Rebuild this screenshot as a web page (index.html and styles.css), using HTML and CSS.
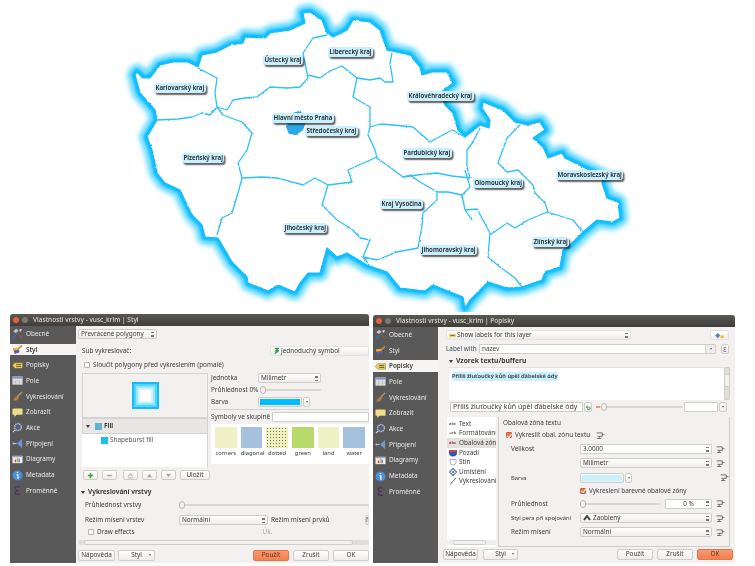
FILE: index.html
```html
<!DOCTYPE html>
<html lang="cs">
<head>
<meta charset="utf-8">
<title>Vlastnosti vrstvy</title>
<link rel="stylesheet" href="styles.css">
</head>
<body>
<svg class="defs" width="0" height="0">
  <defs>
    <filter id="rough" x="-5%" y="-5%" width="110%" height="110%" color-interpolation-filters="sRGB">
      <feTurbulence type="fractalNoise" baseFrequency="0.3" numOctaves="2" seed="4" result="noise"/>
      <feDisplacementMap in="SourceGraphic" in2="noise" scale="2" xChannelSelector="R" yChannelSelector="G"/>
    </filter>
    <filter id="blur3" x="-10%" y="-10%" width="120%" height="120%" color-interpolation-filters="sRGB"><feGaussianBlur stdDeviation="2.400"/></filter>
    <filter id="blur1" x="-10%" y="-10%" width="120%" height="120%" color-interpolation-filters="sRGB"><feGaussianBlur stdDeviation=".8"/></filter>
    <symbol id="i-general" viewBox="0 0 12 12"><path d="M1 11 8 3" stroke="#2f6fc0" stroke-width="1.6"/><path d="M11 11 4 3" stroke="#8a5a2c" stroke-width="1.6"/><path d="M1.500 3.500 4.500.8 7 3 4 5.500Z" fill="#ccc"/><path d="M8 1.500 10.800 1 10 3.500 8.500 4Z" fill="#ddd"/></symbol>
    <symbol id="i-style" viewBox="0 0 12 12"><path d="M1 5 7 4 8 9 3 10.500Z" fill="#d9473d"/><path d="M2 8 8 6.500 8 9 3 10.500Z" fill="#3e66c4"/><path d="M1 5 7 4 7.500 6 1.500 7Z" fill="#e8b93a"/><path d="M7 5 11 1.500" stroke="#c98a3a" stroke-width="1.600"/></symbol>
    <symbol id="i-label" viewBox="0 0 12 12"><path d="M3 3H11.500V9H3L.5 6Z" fill="#eed358" stroke="#7a6520" stroke-width=".5"/><path d="M4.500 5H10M4.500 7H10" stroke="#544" stroke-width=".9"/></symbol>
    <symbol id="i-table" viewBox="0 0 12 12"><rect x=".5" y="1.500" width="11" height="9" fill="#e7e7e7"/><rect x=".5" y="1.500" width="11" height="2.500" fill="#7f97b8"/><path d="M.5 6.500H11.500M.5 8.500H11.500M4 4V10.500M8 4V10.500" stroke="#aaa" stroke-width=".5"/></symbol>
    <symbol id="i-broom" viewBox="0 0 12 12"><path d="M11 1 6 6" stroke="#c9a35a" stroke-width="1.200"/><path d="M6.500 4.500 8 6 5.500 10 1.500 10.500 2.500 7.500Z" fill="#b9823c"/></symbol>
    <symbol id="i-bubble" viewBox="0 0 12 12"><path d="M1.500 1.500H10.500Q11.500 1.500 11.500 2.500V7.500Q11.500 8.500 10.500 8.500H5L2.500 11V8.500H1.500Q.5 8.500 .5 7.500V2.500Q.5 1.500 1.500 1.500Z" fill="#eedd85"/></symbol>
    <symbol id="i-gear" viewBox="0 0 12 12"><circle cx="6.500" cy="5.500" r="3.700" fill="none" stroke="#aebfe0" stroke-width="1.700" stroke-dasharray="1.600 .7"/><circle cx="6.500" cy="5.500" r="1.500" fill="#3f68b8"/><path d="M3.500 8.500 1 11" stroke="#ddd" stroke-width="1.200"/></symbol>
    <symbol id="i-join" viewBox="0 0 12 12"><path d="M11 1V11L5.500 6Z" fill="#6f96d8"/><path d="M1 6H5" stroke="#a9c3ea" stroke-width="1.300"/><circle cx="1.500" cy="6" r="1" fill="#a9c3ea"/></symbol>
    <symbol id="i-chart" viewBox="0 0 12 12"><rect x=".5" y="2" width="11" height="8" fill="#efefef"/><rect x="3" y="6" width="1.500" height="3" fill="#d2483f"/><rect x="5" y="4" width="1.500" height="5" fill="#e2b33b"/><rect x="7" y="5" width="1.500" height="4" fill="#4b77c9"/><rect x=".5" y="2" width="11" height="1.500" fill="#8ea6c8"/></symbol>
    <symbol id="i-info" viewBox="0 0 12 12"><circle cx="6" cy="6" r="5.500" fill="#4a8fdc"/><path d="M6 2.300V3.600M5 5.200H6.400V9.500" stroke="#fff" stroke-width="1.400" fill="none"/></symbol>
    <symbol id="i-eps" viewBox="0 0 12 12"><path d="M8.500 2H4.500Q3 2 3.500 3.500L5 6 3.500 8.500Q3 10 4.500 10H8.500M4.500 6H7.500" fill="none" stroke="#4c2f66" stroke-width="1.200"/></symbol>
    <symbol id="i-data" viewBox="0 0 10 8"><path d="M.5 1H7V5H1.500M7 3H9.500M3.500 5V7.500M1 7.500H6" fill="none" stroke="#55554f" stroke-width=".9"/></symbol>
  </defs>
</svg>

<div class="map">
  <svg class="map-svg" width="755" height="312" viewBox="0 0 755 312">
    <path class="glow-wide" filter="url(#blur3)" d="M137 72 143 78 150 78 160 65 173 62 188 62 198 67 202 55 217 52 230 45 243 43 245 37 265 38 270 33 290 30 305 23 303 13 310 12 322 20 327 33 333 37 347 30 353 20 370 22 380 30 387 50 410 55 420 67 422 75 432 72 447 72 453 83 440 93 445 105 453 113 458 130 465 137 480 125 489 128 490 120 482 108 483 102 503 110 515 122 527 125 540 122 545 130 533 138 543 147 548 158 562 153 565 158 583 167 603 177 602 183 607 198 618 202 620 218 613 222 597 220 583 232 570 245 563 250 560 267 545 272 542 280 522 287 507 288 488 282 470 300 465 308 463 297 433 285 425 291 400 288 387 272 367 265 347 253 337 257 327 248 320 273 308 273 300 283 295 292 278 285 268 291 248 283 247 277 232 262 218 238 205 237 202 225 192 215 180 190 165 183 157 173 152 150 147 137 157 120 155 110 140 93 135 75Z"/>
    <path class="glow-core" filter="url(#blur1)" d="M137 72 143 78 150 78 160 65 173 62 188 62 198 67 202 55 217 52 230 45 243 43 245 37 265 38 270 33 290 30 305 23 303 13 310 12 322 20 327 33 333 37 347 30 353 20 370 22 380 30 387 50 410 55 420 67 422 75 432 72 447 72 453 83 440 93 445 105 453 113 458 130 465 137 480 125 489 128 490 120 482 108 483 102 503 110 515 122 527 125 540 122 545 130 533 138 543 147 548 158 562 153 565 158 583 167 603 177 602 183 607 198 618 202 620 218 613 222 597 220 583 232 570 245 563 250 560 267 545 272 542 280 522 287 507 288 488 282 470 300 465 308 463 297 433 285 425 291 400 288 387 272 367 265 347 253 337 257 327 248 320 273 308 273 300 283 295 292 278 285 268 291 248 283 247 277 232 262 218 238 205 237 202 225 192 215 180 190 165 183 157 173 152 150 147 137 157 120 155 110 140 93 135 75Z"/>
    <g filter="url(#rough)">
      <path class="land" d="M137 72 143 78 150 78 160 65 173 62 188 62 198 67 202 55 217 52 230 45 243 43 245 37 265 38 270 33 290 30 305 23 303 13 310 12 322 20 327 33 333 37 347 30 353 20 370 22 380 30 387 50 410 55 420 67 422 75 432 72 447 72 453 83 440 93 445 105 453 113 458 130 465 137 480 125 489 128 490 120 482 108 483 102 503 110 515 122 527 125 540 122 545 130 533 138 543 147 548 158 562 153 565 158 583 167 603 177 602 183 607 198 618 202 620 218 613 222 597 220 583 232 570 245 563 250 560 267 545 272 542 280 522 287 507 288 488 282 470 300 465 308 463 297 433 285 425 291 400 288 387 272 367 265 347 253 337 257 327 248 320 273 308 273 300 283 295 292 278 285 268 291 248 283 247 277 232 262 218 238 205 237 202 225 192 215 180 190 165 183 157 173 152 150 147 137 157 120 155 110 140 93 135 75Z"/>
      <path class="prague" d="M290 114 298 111 305 114 306 122 303 130 296 135 289 134 286 127 288 120Z"/>
      <g class="borders">
        <path d="M157 120 178 119 192 117 202 113 210 115 217 107"/>
        <path d="M198 68 217 78 215 93 217 107 227 110 233 100 245 98 257 97 270 87 287 88 300 87 308 78 305 63 303 53 313 38 327 35"/>
        <path d="M308 75 320 78 330 71 342 66 357 78 370 80 380 78 385 82 393 82 390 63 392 53"/>
        <path d="M217 107 223 115 242 122 252 133 247 150 238 163 242 178 238 193 232 213 222 218 217 235"/>
        <path d="M242 178 262 177 277 178 303 185 315 178 328 185 352 182 348 170 377 157 375 150 368 135 370 127 370 107 353 97 357 78"/>
        <path d="M370 127 380 124 393 125 413 127 430 142 452 130 465 137"/>
        <path d="M375 157 387 165 403 177 417 175 437 173 452 176 470 178 467 167 467 150 473 142 480 128"/>
        <path d="M403 177 410 175 420 182 437 192 437 200 423 213 422 225 418 248 397 252 377 260 363 257 368 263"/>
        <path d="M328 185 322 205 337 220 353 230 360 238 370 240 363 257"/>
        <path d="M437 192 448 192 462 195 470 187 465 170"/>
        <path d="M462 195 465 210 472 220 465 210 477 209 490 233 488 257 500 267 515 278 522 287"/>
        <path d="M490 235 507 223 515 228 528 220 547 212 573 220 583 232"/>
        <path d="M520 125 507 138 498 163 507 172 518 170 533 185 535 193 545 203 548 212"/>
      </g>
    </g>
  </svg>
  <span class="map-label lb-karlovarsky">Karlovarský kraj</span>
  <span class="map-label lb-ustecky">Ústecký kraj</span>
  <span class="map-label lb-liberecky">Liberecký kraj</span>
  <span class="map-label lb-kralove">Královéhradecký kraj</span>
  <span class="map-label lb-praha">Hlavní město Praha</span>
  <span class="map-label lb-stredo">Středočeský kraj</span>
  <span class="map-label lb-plzen">Plzeňský kraj</span>
  <span class="map-label lb-pardubicky">Pardubický kraj</span>
  <span class="map-label lb-olomoucky">Olomoucký kraj</span>
  <span class="map-label lb-moravsko">Moravskoslezský kraj</span>
  <span class="map-label lb-vysocina">Kraj Vysočina</span>
  <span class="map-label lb-jihocesky">Jihočeský kraj</span>
  <span class="map-label lb-jihomor">Jihomoravský kraj</span>
  <span class="map-label lb-zlin">Zlínský kraj</span>
</div>

<section class="window win-left">
  <header class="titlebar"><i class="dot dot-close"></i><i class="dot"></i><span class="title-text">Vlastnosti vrstvy - vusc_krim | Styl</span></header>
  <div class="win-body">
    <nav class="sidebar">
      <div class="nav-item"><svg class="nav-icon"><use href="#i-general"/></svg>Obecné</div>
      <div class="nav-item active"><svg class="nav-icon"><use href="#i-style"/></svg>Styl</div>
      <div class="nav-item"><svg class="nav-icon"><use href="#i-label"/></svg>Popisky</div>
      <div class="nav-item"><svg class="nav-icon"><use href="#i-table"/></svg>Pole</div>
      <div class="nav-item"><svg class="nav-icon"><use href="#i-broom"/></svg>Vykreslování</div>
      <div class="nav-item"><svg class="nav-icon"><use href="#i-bubble"/></svg>Zobrazit</div>
      <div class="nav-item"><svg class="nav-icon"><use href="#i-gear"/></svg>Akce</div>
      <div class="nav-item"><svg class="nav-icon"><use href="#i-join"/></svg>Připojení</div>
      <div class="nav-item"><svg class="nav-icon"><use href="#i-chart"/></svg>Diagramy</div>
      <div class="nav-item"><svg class="nav-icon"><use href="#i-info"/></svg>Metadata</div>
      <div class="nav-item"><svg class="nav-icon"><use href="#i-eps"/></svg>Proměnné</div>
    </nav>
    <div class="content content-style">
      <div class="ctl sel w-renderer">Převrácené polygony<i class="spin"></i></div>
      <div class="row row-sub"><span class="indent">Sub vykreslovač:</span><div class="ctl btn-symbol"><svg class="sym-icon" viewBox="0 0 6 8"><path d="M1 1 5 1 2 4 5 4 1 7" fill="none" stroke="#2a9d4a" stroke-width="1.500"/></svg>Jednoduchý symbol</div></div>
      <label class="row row-merge"><i class="check"></i>Sloučit polygony před vykreslením (pomalé)</label>
      <div class="split">
        <div class="col-tree">
          <div class="preview"><div class="burst"></div></div>
          <div class="tree-head"><i class="tri"></i><i class="swatch-small muted"></i>Fill</div>
          <div class="tree-body"><div class="tree-row"><i class="swatch-small"></i>Shapeburst fill</div></div>
        </div>
        <div class="col-props">
          <div class="prop-row"><span class="prop-label">Jednotka</span><div class="ctl sel w-unit">Milimetr<i class="spin"></i></div></div>
          <div class="prop-row prop-slider"><span class="prop-label prop-wide">Průhlednost 0%</span><div class="slider slider-opacity"><i class="knob"></i></div></div>
          <div class="prop-row"><span class="prop-label">Barva</span><div class="ctl color-btn"><i class="color-fill"></i></div><div class="ctl drop-btn"><i class="tri-small"></i></div></div>
          <div class="prop-sep"></div>
          <div class="group-row"><span>Symboly ve skupině</span><div class="text-input group-input"></div></div>
          <div class="symbols">
            <figure class="symbol"><i class="sw sw-land"></i><figcaption>corners</figcaption></figure>
            <figure class="symbol"><i class="sw sw-water"></i><figcaption>diagonal</figcaption></figure>
            <figure class="symbol"><i class="sw sw-dots"></i><figcaption>dotted</figcaption></figure>
            <figure class="symbol"><i class="sw sw-green"></i><figcaption>green</figcaption></figure>
            <figure class="symbol"><i class="sw sw-land"></i><figcaption>land</figcaption></figure>
            <figure class="symbol"><i class="sw sw-water"></i><figcaption>water</figcaption></figure>
          </div>
        </div>
      </div>
      <div class="tool-row">
        <div class="ctl tool"><svg class="tool-icon" viewBox="0 0 8 8"><path d="M4 1V7M1 4H7" stroke="#3f9b3f" stroke-width="1.600"/></svg></div>
        <div class="ctl tool"><svg class="tool-icon" viewBox="0 0 8 8"><path d="M1 4H7" stroke="#aaa" stroke-width="1.600"/></svg></div>
        <div class="ctl tool tool-gap"><svg class="tool-icon" viewBox="0 0 8 8"><path d="M2 3.500H6V7H2ZM3 3.500V2H5V3.500" fill="none" stroke="#bbb"/></svg></div>
        <div class="ctl tool"><svg class="tool-icon" viewBox="0 0 8 8"><path d="M4 2 7 6H1Z" fill="#aaa"/></svg></div>
        <div class="ctl tool"><svg class="tool-icon" viewBox="0 0 8 8"><path d="M4 6 7 2H1Z" fill="#aaa"/></svg></div>
        <div class="ctl tool-save">Uložit</div>
      </div>
      <h3 class="section-title"><i class="tri"></i>Vykreslování vrstvy</h3>
      <div class="row row-opacity"><span class="layer-label">Průhlednost vrstvy</span><div class="slider slider-layer"><i class="knob"></i></div></div>
      <div class="row row-blend"><span class="layer-label">Režim mísení vrstev</span><div class="ctl sel w-blend">Normální<i class="spin"></i></div><span class="blend-2">Režim mísení prvků</span><div class="ctl w-blend-2">N</div></div>
      <label class="row row-effects"><i class="check"></i>Draw effects<span class="faint">Úk.</span></label>
      <div class="hscroll"><i class="hscroll-thumb"></i></div>
      <footer class="buttons">
        <div class="ctl btn w-help">Nápověda</div>
        <div class="ctl btn w-stylebtn">Styl<i class="tri-small"></i></div>
        <div class="spacer"></div>
        <div class="ctl btn btn-main">Použít</div>
        <div class="ctl btn btn-std">Zrušit</div>
        <div class="ctl btn btn-std">OK</div>
      </footer>
    </div>
  </div>
</section>

<section class="window win-right">
  <header class="titlebar"><i class="dot dot-close"></i><i class="dot"></i><span class="title-text">Vlastnosti vrstvy - vusc_krim | Popisky</span></header>
  <div class="win-body">
    <nav class="sidebar">
      <div class="nav-item"><svg class="nav-icon"><use href="#i-general"/></svg>Obecné</div>
      <div class="nav-item"><svg class="nav-icon"><use href="#i-style"/></svg>Styl</div>
      <div class="nav-item active"><svg class="nav-icon"><use href="#i-label"/></svg>Popisky</div>
      <div class="nav-item"><svg class="nav-icon"><use href="#i-table"/></svg>Pole</div>
      <div class="nav-item"><svg class="nav-icon"><use href="#i-broom"/></svg>Vykreslování</div>
      <div class="nav-item"><svg class="nav-icon"><use href="#i-bubble"/></svg>Zobrazit</div>
      <div class="nav-item"><svg class="nav-icon"><use href="#i-gear"/></svg>Akce</div>
      <div class="nav-item"><svg class="nav-icon"><use href="#i-join"/></svg>Připojení</div>
      <div class="nav-item"><svg class="nav-icon"><use href="#i-chart"/></svg>Diagramy</div>
      <div class="nav-item"><svg class="nav-icon"><use href="#i-info"/></svg>Metadata</div>
      <div class="nav-item"><svg class="nav-icon"><use href="#i-eps"/></svg>Proměnné</div>
    </nav>
    <div class="content content-labels">
      <div class="r-top">
        <div class="ctl sel w-show"><svg class="mini-label" viewBox="0 0 8 6"><path d="M0 1H8V5H0Z" fill="#eed358"/><path d="M1.500 3H6.500" stroke="#555"/></svg>Show labels for this layer<i class="spin"></i></div>
        <div class="ctl btn-engine"><svg class="engine-icon" viewBox="0 0 12 8"><path d="M4 1 7 4 4 7 1 4Z" fill="#5d7fb5"/><path d="M7 4H11V7H7Z" fill="#e6c83c"/></svg></div>
      </div>
      <div class="r-with">
        <span class="with-label">Label with</span>
        <div class="text-input with-input">nazev<i class="with-drop"><i class="tri-small"></i></i></div>
        <div class="ctl eps-btn"><svg class="eps-icon"><use href="#i-eps"/></svg></div>
      </div>
      <h3 class="section-title section-sample"><i class="tri"></i>Vzorek textu/bufferu</h3>
      <div class="sample">
        <div class="sample-box"><span class="sample-text">Příliš žluťoučký kůň úpěl ďábelské ódy</span></div>
        <div class="vscroll"><i class="vscroll-thumb"></i></div>
      </div>
      <div class="r-sample">
        <div class="text-input sample-input">Příliš žluťoučký kůň úpěl ďábelské ódy</div>
        <div class="ctl reset-btn"><svg class="tool-icon" viewBox="0 0 8 8"><path d="M2 3.500H5.500A1.500 1.500 0 0 1 5.500 6.500H3M3.500 1.500 1.500 3.500 3.500 5.500" fill="none" stroke="#3f9b3f" stroke-width="1.200"/></svg></div>
        <i class="dash"></i>
        <div class="slider slider-sample"><i class="knob"></i></div>
        <div class="text-input size-input"></div>
        <div class="ctl drop-btn drop-size"><i class="tri-small"></i></div>
      </div>
      <div class="r-panels">
        <div class="tabs">
          <div class="tab-list">
            <div class="tab"><b class="tab-glyph">abc</b>Text</div>
            <div class="tab"><b class="tab-glyph">+ab</b>Formátování</div>
            <div class="tab tab-on"><b class="tab-glyph tab-buf">abc</b>Obalová zóna</div>
            <div class="tab"><svg class="tab-icon" viewBox="0 0 8 8"><path d="M0 1H8V3.500Q8 7.500 4 7.500 0 7.500 0 3.500Z" fill="#2f55b8"/><path d="M0 1H8V3H0Z" fill="#d0473f"/></svg>Pozadí</div>
            <div class="tab"><svg class="tab-icon" viewBox="0 0 8 8"><path d="M1 1.500H7V4Q7 7 4 7 1 7 1 4Z" fill="#fff" stroke="#a7b4d2"/></svg>Stín</div>
            <div class="tab"><svg class="tab-icon" viewBox="0 0 8 8"><path d="M4 .5 7.500 4 4 7.500 .5 4Z" fill="none" stroke="#5d7fb5" stroke-width="1.300"/><circle cx="4" cy="4" r="1" fill="#555"/></svg>Umístění</div>
            <div class="tab"><svg class="tab-icon" viewBox="0 0 8 8"><path d="M1 7.500 7 1" stroke="#666"/></svg>Vykreslování</div>
          </div>
          <div class="tab-scroll"><i class="hscroll-thumb tab-thumb"></i></div>
        </div>
        <div class="panel">
          <div class="panel-title">Obalová zóna textu</div>
          <label class="panel-check"><i class="check on"></i>Vykreslit obal. zónu textu<svg class="dd dd-title"><use href="#i-data"/></svg></label>
          <div class="form-row"><span class="form-label">Velikost</span><div class="text-input f-input">3.0000<i class="spin"></i></div><svg class="dd"><use href="#i-data"/></svg></div>
          <div class="form-row"><span class="form-label"></span><div class="ctl sel f-input">Milimetr<i class="spin"></i></div><svg class="dd"><use href="#i-data"/></svg></div>
          <div class="form-row"><span class="form-label small-label">Barva</span><div class="ctl color-btn f-color"><i class="color-fill fill-pale"></i></div><div class="ctl drop-btn"><i class="tri-small"></i></div><span class="spacer"></span><svg class="dd"><use href="#i-data"/></svg></div>
          <label class="form-row check-row"><span class="form-label"></span><i class="check on"></i>Vykreslení barevné obalové zóny</label>
          <div class="form-row"><span class="form-label">Průhlednost</span><div class="slider slider-form"><i class="knob"></i></div><div class="text-input pct-input">0 %<i class="spin"></i></div><svg class="dd"><use href="#i-data"/></svg></div>
          <div class="form-row"><span class="form-label small-label">Styl pera při spojování</span><div class="ctl sel f-input"><svg class="join-icon" viewBox="0 0 8 6"><path d="M1 5 4 1 7 5" fill="none" stroke="#444" stroke-width="2"/></svg>Zaoblený<i class="spin"></i></div><svg class="dd"><use href="#i-data"/></svg></div>
          <div class="form-row"><span class="form-label">Režim mísení</span><div class="ctl sel f-input">Normální<i class="spin"></i></div><svg class="dd"><use href="#i-data"/></svg></div>
        </div>
      </div>
      <footer class="buttons buttons-right">
        <div class="ctl btn w-help">Nápověda</div>
        <div class="ctl btn w-stylebtn">Styl<i class="tri-small"></i></div>
        <div class="spacer"></div>
        <div class="ctl btn btn-std">Použít</div>
        <div class="ctl btn btn-std">Zrušit</div>
        <div class="ctl btn btn-main">OK</div>
      </footer>
    </div>
  </div>
</section>
</body>
</html>
```
FILE: styles.css
```css
* { box-sizing: border-box; }
html, body { margin: 0; padding: 0; }
body { position: relative; width: 755px; height: 566px; background: #fff; overflow: hidden; font-family: "Noto Sans", "Open Sans", sans-serif; font-size: 6.400px; line-height: 10px; color: #3c3b37; }
i { display: block; font-style: normal; }
h3, figure { margin: 0; }
.defs { position: absolute; }

/* map */
.map { position: absolute; left: 0; top: 0; width: 755px; height: 312px; }
.map-svg { display: block; }
.glow-wide { fill: none; stroke: #66daff; stroke-width: 16; stroke-linejoin: round; }
.glow-core { fill: none; stroke: #0fbcff; stroke-width: 6.500; stroke-linejoin: round; }
.land { fill: #fff; stroke: #12bdff; stroke-width: 1.200; stroke-linejoin: round; }
.prague { fill: #2aa8ea; }
.borders path { fill: none; stroke: #2cc0ff; stroke-width: 1.300; stroke-linejoin: round; }
.map-label { position: absolute; padding: 0 1.500px; height: 10px; line-height: 10px; white-space: nowrap; font-size: 6.200px; font-weight: 600; color: #222; background: #c9f0ff; border-radius: 3px; box-shadow: 1.500px 2px 1.500px rgba(30, 30, 30, .7); filter: blur(.3px); }
.lb-karlovarsky { left: 154px; top: 83px; }
.lb-ustecky { left: 263px; top: 55px; }
.lb-liberecky { left: 328px; top: 47px; }
.lb-kralove { left: 407px; top: 91px; }
.lb-praha { left: 272px; top: 113px; }
.lb-stredo { left: 305px; top: 126px; }
.lb-plzen { left: 182px; top: 153px; }
.lb-pardubicky { left: 402px; top: 148px; }
.lb-olomoucky { left: 473px; top: 178px; }
.lb-moravsko { left: 556px; top: 170px; }
.lb-vysocina { left: 380px; top: 199px; }
.lb-jihocesky { left: 283px; top: 223px; }
.lb-jihomor { left: 420px; top: 245px; }
.lb-zlin { left: 532px; top: 237px; }

/* windows */
.window { position: absolute; display: flex; flex-direction: column; background: #f2f1f0; filter: blur(.3px); }
.win-left { left: 10px; top: 314px; width: 359px; height: 249px; }
.win-right { left: 373px; top: 315px; width: 362px; height: 248px; }
.titlebar { flex: none; height: 12px; display: flex; align-items: center; padding-left: 3px; gap: 3px; border-radius: 3px 3px 0 0; background: linear-gradient(#5a5852, #3f3e3a); color: #dfdbd2; }
.dot { width: 6px; height: 6px; border-radius: 50%; background: #7b7a75; }
.dot-close { background: #e2633a; }
.title-text { margin-left: 2px; font-size: 6.500px; font-weight: 500; }
.win-body { flex: 1; display: flex; min-height: 0; }
.sidebar { flex: none; width: 66px; background: #595959; }
.win-right .sidebar { width: 65px; }
.nav-item { display: flex; align-items: center; height: 15.700px; padding-left: 2px; gap: 3px; color: #e8e8e8; }
.nav-item.active { height: 11.700px; margin: 2px 0; background: #f6f5f4; color: #3c3b37; font-weight: 600; }
.nav-icon { flex: none; width: 11px; height: 11px; }

/* generic controls */
.content { flex: 1; min-width: 0; display: flex; flex-direction: column; }
.ctl { height: 10px; border: 1px solid #cfcdc8; border-radius: 2px; background: linear-gradient(#fff, #eeedeb); display: flex; align-items: center; line-height: 8px; padding: 0 2px; white-space: nowrap; }
.sel { position: relative; padding-right: 6px; }
.spin { position: absolute; right: 2px; top: 1.500px; width: 3px; height: 5px; background: linear-gradient(#777 0 30%, transparent 30% 70%, #777 70%); }
.text-input { position: relative; height: 10px; background: #fff; border: 1px solid #cfcdc8; border-radius: 1px; line-height: 8px; padding: 0 2px; white-space: nowrap; overflow: hidden; }
.row { display: flex; align-items: center; }
.spacer { flex: 1; }
.check { position: relative; flex: none; width: 6px; height: 6px; border: 1px solid #b8b5b0; border-radius: 1px; background: #fff; margin-right: 3px; }
.check.on { background: #e8784a; border-color: #c8603a; }
.check.on::after { content: ""; position: absolute; left: .8px; top: -.5px; width: 2px; height: 3.500px; border: solid #fff; border-width: 0 .8px .8px 0; transform: rotate(40deg); }
.tri { flex: none; width: 0; height: 0; border: 2.500px solid transparent; border-top: 3.500px solid #3c3b37; border-bottom: 0; margin-right: 3px; }
.tri-small { width: 0; height: 0; border: 1.500px solid transparent; border-top: 2px solid #666; border-bottom: 0; }
.slider { position: relative; height: 2px; background: #d9d7d3; border-radius: 1px; }
.knob { position: absolute; left: 0; top: -3px; width: 6px; height: 8px; background: #f2f1f0; border: 1px solid #bdbab5; border-radius: 3px; }
.color-btn { width: 44px; padding: 1px; }
.color-fill { width: 100%; height: 100%; background: #00bfff; }
.fill-pale { background: #c8f0ff; }
.drop-btn { width: 7px; margin-left: 1px; padding: 0; justify-content: center; }

/* left window */
.content-style { padding: 3px 0 0 2px; }
.w-renderer { width: 79px; }
.row-sub { height: 10px; margin-top: 7px; justify-content: space-between; }
.indent { margin-left: 4px; }
.btn-symbol { width: 99px; border-color: #e4e3e0; padding-left: 3px; }
.sym-icon { width: 5px; height: 8px; margin-right: 2px; }
.row-merge { height: 10px; margin: 4px 0 0 6px; }
.split { display: flex; height: 94px; margin-top: 3px; padding-left: 4px; }
.col-tree { flex: none; width: 126px; }
.preview { height: 45px; border: 1px solid #d5d3cf; display: flex; align-items: center; justify-content: center; }
.burst { width: 27px; height: 27px; background: #fff; box-shadow: inset 0 0 0 2px #10bdff, inset 0 0 0 4px #55d2ff, inset 0 0 0 6px #97e5ff, inset 0 0 0 8px #d2f4ff; }
.tree-head { height: 16px; display: flex; align-items: center; padding-left: 3px; background: #e8e7e5; border: 1px solid #d5d3cf; font-weight: 700; }
.swatch-small { flex: none; width: 7px; height: 7px; margin-right: 2px; background: #18bdfa; }
.swatch-small.muted { background: #62b4d4; margin-left: 2px; }
.tree-body { height: 33px; background: #fff; padding: 1px 0 0 19px; border-right: 1px solid #d5d3cf; }
.tree-row { display: flex; align-items: center; height: 10px; color: #555; }
.col-props { flex: 1; margin-left: 3px; min-width: 0; }
.prop-row { display: flex; align-items: center; height: 10px; margin-bottom: 2px; }
.prop-slider { position: relative; }
.prop-label { width: 47px; flex: none; }
.prop-wide { width: 49px; white-space: nowrap; }
.w-unit { width: 63px; }
.slider-opacity { width: 61px; }
.prop-sep { height: 1px; background: #d5d3cf; margin: 0 0 2px; }
.group-row { display: flex; align-items: center; height: 10px; gap: 2px; }
.group-row span { white-space: nowrap; }
.group-input { flex: 1; }
.symbols { display: flex; gap: 4.200px; height: 40px; margin-top: 2px; padding: 3px 0 0 4px; background: #fff; }
.symbol { width: 21.500px; text-align: center; font-size: 5.800px; }
.sw { height: 21px; }
.symbol figcaption { line-height: 10px; }
.sw-land { background: #eef2c4; }
.sw-water { background: #a6c1de; }
.sw-green { background: #b7da6a; }
.sw-dots { background: radial-gradient(#7a7a50 .5px, transparent .8px) 0 0/3px 3px, #eef0c0; }
.tool-row { display: flex; align-items: center; height: 10px; margin-top: 3px; padding-left: 5px; gap: 4px; }
.tool { width: 15px; justify-content: center; padding: 0; }
.tool-gap { margin-left: 2px; }
.tool-icon { width: 7px; height: 7px; }
.tool-save { width: 30px; justify-content: center; }
.section-title { display: flex; align-items: center; height: 10px; font-size: 6.500px; font-weight: 700; margin: 7px 0 0 3px; }
.row-opacity { height: 10px; margin-top: 3px; }
.layer-label { width: 94px; flex: none; margin-left: 7px; }
.slider-layer { flex: 1; }
.row-blend { height: 10px; margin-top: 5px; }
.w-blend { width: 89px; }
.blend-2 { margin-left: 3px; white-space: nowrap; }
.w-blend-2 { width: 4px; margin-left: auto; padding: 0; overflow: hidden; }
.row-effects { height: 9px; margin: 2px 0 0 10px; }
.faint { margin-left: 128px; color: #aaa; }
.hscroll { position: relative; height: 5px; margin-top: 4px; background: #dfdedb; border-radius: 2px; }
.hscroll-thumb { position: absolute; left: 6px; right: 16px; top: 0; height: 100%; background: #f2f1f0; border: 1px solid #cfcdc8; border-radius: 2px; }
.buttons { display: flex; align-items: center; gap: 4px; height: 10px; margin-top: 5px; }
.btn { justify-content: center; height: 11px; position: relative; }
.w-help { width: 37px; }
.w-stylebtn { width: 37px; margin-left: -1px; }
.w-stylebtn .tri-small { position: absolute; right: 3px; top: 3.500px; }
.btn-std { width: 36px; }
.btn-main { width: 36px; background: linear-gradient(#f79a72, #f4804f); border-color: #e4754a; color: #5a3020; }

/* right window */
.content-labels { padding: 3px 0 0 8px; }
.r-top { display: flex; align-items: center; height: 10px; justify-content: space-between; padding-right: 6px; }
.w-show { width: 185px; border-color: #e4e3e0; }
.mini-label { width: 7px; height: 5px; margin-right: 1px; }
.btn-engine { width: 19px; justify-content: center; padding: 0; border-color: #e4e3e0; }
.engine-icon { width: 11px; height: 7px; }
.r-with { display: flex; align-items: center; height: 10px; margin-top: 4px; }
.with-label { color: #44505f; width: 33px; flex: none; white-space: nowrap; }
.with-input { width: 237px; }
.with-drop { position: absolute; right: 0; top: 0; bottom: 0; width: 10px; display: flex; align-items: center; justify-content: center; background: #eeedeb; border-left: 1px solid #d5d3cf; }
.eps-btn { width: 8px; margin-left: 5px; padding: 0; justify-content: center; }
.eps-icon { width: 7px; height: 7px; }
.section-sample { margin: 2px 0 0 3px; font-size: 6.700px; }
.sample { display: flex; height: 33px; margin: 1px 0 0 3px; }
.sample-box { flex: none; width: 275px; background: #fff; padding: 3px; border-top: 1px solid #e4e3e0; }
.sample-text { display: inline-block; line-height: 9px; font-weight: 600; font-size: 5.700px; color: #333; background: #c9f0ff; border-radius: 3px; }
.vscroll { position: relative; flex: none; width: 6px; background: #dfdedb; border: 1px solid #cfcdc8; border-radius: 2px; }
.vscroll-thumb { position: absolute; top: 6px; left: 0; right: 0; height: 13px; background: #f2f1f0; border-bottom: 1px solid #cfcdc8; border-top: 1px solid #cfcdc8; }
.r-sample { display: flex; align-items: center; height: 10px; margin: 2px 0 0 4px; }
.sample-input { width: 133px; font-size: 7px; }
.reset-btn { width: 8px; margin-left: 1px; padding: 0; justify-content: center; }
.dash { width: 4px; height: 2px; margin-left: 4px; background: #f09070; }
.slider-sample { width: 83px; }
.slider-sample .knob { left: 1px; }
.size-input { width: 34px; margin-left: 1px; }
.drop-size { margin-left: 1px; width: 8px; }
.r-panels { display: flex; height: 130px; margin: 5px 0 0 1px; }
.tabs { flex: none; width: 49px; display: flex; flex-direction: column; background: #fff; overflow: hidden; }
.tab-list { flex: 1; padding-top: 2px; }
.tab { display: flex; align-items: center; height: 9.600px; padding-left: 2px; white-space: nowrap; color: #3c3b37; }
.tab-on { background: #e3e1df; }
.tab-glyph { flex: none; width: 9px; margin-right: 1px; font-size: 4px; line-height: 6px; color: #666; }
.tab-buf { color: #a33; }
.tab-icon { flex: none; width: 8px; height: 8px; margin-right: 2px; }
.tab-scroll { position: relative; height: 5px; margin-bottom: 2px; background: #eee; }
.tab-thumb { left: 6px; right: 10px; }
.panel { flex: none; width: 232px; height: 130px; margin-left: 2px; border: 1px solid #cfcdc8; border-top: 0; padding-left: 4px; }
.panel-title { height: 10px; margin-top: 1px; }
.panel-check { display: flex; align-items: center; height: 10px; margin: 2px 0 0 3px; }
.dd { flex: none; width: 9px; height: 7px; margin-left: 4px; }
.dd-title { margin-left: 6px; }
.form-row { display: flex; align-items: center; height: 10px; margin-top: 4.300px; padding-left: 8px; }
.panel-check + .form-row { margin-top: 4px; }
.form-label { flex: none; width: 69px; white-space: nowrap; }
.small-label { font-size: 5.800px; }
.f-input { width: 132px; }
.text-input .spin { top: 1.500px; }
.f-color { width: 44px; }
.check-row { height: 8px; margin-top: 4px; }
.slider-form { width: 81px; }
.pct-input { width: 47px; margin-left: 4px; text-align: center; }
.join-icon { flex: none; width: 8px; height: 6px; margin-right: 2px; }
.buttons-right { margin-top: 2px; padding-right: 2px; }
.buttons-right .w-help { width: 35px; margin-left: -3px; }
.buttons-right .w-stylebtn { width: 35px; margin-left: 1px; }
```
